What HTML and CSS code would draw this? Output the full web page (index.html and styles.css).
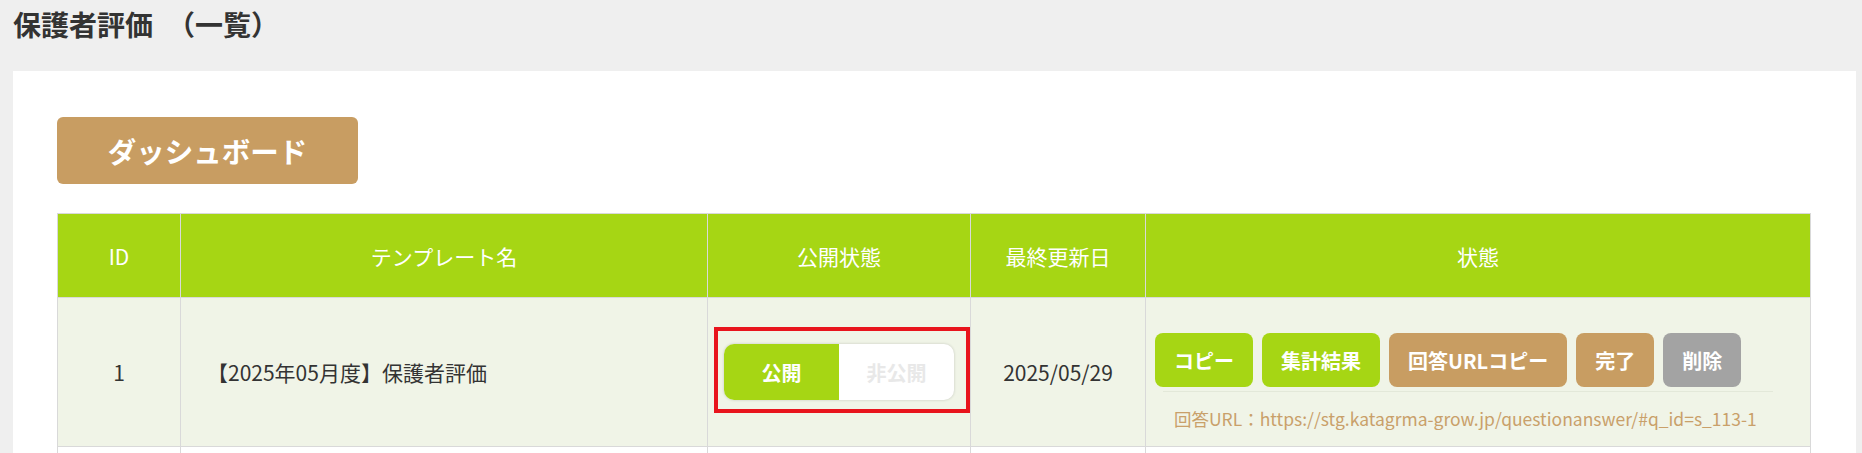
FILE: index.html
```html
<!DOCTYPE html>
<html lang="ja">
<head>
<meta charset="utf-8">
<title>保護者評価（一覧）</title>
<link rel="stylesheet" href="styles.css">
</head>
<body>
<h1 class="page-title">保護者評価　（一覧）</h1>
<main class="panel">
  <a class="btn-dashboard" href="#">ダッシュボード</a>
  <table class="list">
    <colgroup>
      <col class="c-id"><col class="c-name"><col class="c-pub"><col class="c-date"><col class="c-state">
    </colgroup>
    <thead>
      <tr>
        <th>ID</th>
        <th>テンプレート名</th>
        <th>公開状態</th>
        <th>最終更新日</th>
        <th>状態</th>
      </tr>
    </thead>
    <tbody>
      <tr class="row-odd">
        <td class="center">1</td>
        <td class="name">【2025年05月度】保護者評価</td>
        <td class="center">
          <div class="toggle">
            <span class="toggle-on">公開</span>
            <span class="toggle-off">非公開</span>
            <span class="mark"></span>
          </div>
        </td>
        <td class="center">2025/05/29</td>
        <td class="state">
          <div class="actions">
            <a class="btn btn-green" href="#">コピー</a>
            <a class="btn btn-green" href="#">集計結果</a>
            <a class="btn btn-tan" href="#">回答URLコピー</a>
            <a class="btn btn-tan" href="#">完了</a>
            <a class="btn btn-gray" href="#">削除</a>
          </div>
          <div class="answer-url">回答URL：https://stg.katagrma-grow.jp/questionanswer/#q_id=s_113-1</div>
        </td>
      </tr>
      <tr class="row-even">
        <td></td><td></td><td></td><td></td><td></td>
      </tr>
    </tbody>
  </table>
</main>
</body>
</html>
```
FILE: styles.css
```css
* { box-sizing: border-box; }

html, body {
  margin: 0;
  padding: 0;
  background: #efefef;
  font-family: "Noto Sans CJK JP", "Noto Sans", sans-serif;
  color: #333;
  overflow: hidden;
}

.page-title {
  margin: 0 0 27px;
  padding: 4px 13px 0;
  font-size: 28px;
  line-height: 40px;
  font-weight: 700;
  color: #333;
}

.panel {
  display: block;
  margin: 0 6px 0 13px;
  padding: 46px 45px 40px 44px;
  background: #fff;
  min-height: 500px;
}

.btn-dashboard {
  display: inline-flex;
  align-items: center;
  justify-content: center;
  width: 301px;
  height: 67px;
  border-radius: 6px;
  background: #c89d62;
  color: #fff;
  font-size: 28.5px;
  font-weight: 700;
  text-decoration: none;
}

.list {
  margin-top: 29px;
  width: 100%;
  border-collapse: collapse;
  table-layout: fixed;
  font-size: 21px;
}

.c-id { width: 123px; }
.c-name { width: 527px; }
.c-pub { width: 263px; }
.c-date { width: 175px; }

.list th,
.list td {
  border: 1px solid #d9d9d9;
}

.list th {
  height: 84px;
  background: #a6d614;
  color: #fff;
  font-weight: 400;
  text-align: center;
  vertical-align: middle;
}

.list td {
  height: 149px;
  vertical-align: middle;
  padding: 0;
}

.row-odd td { background: #f0f4e7; }
.row-even td { background: #fff; }

.center { text-align: center; }

.name {
  padding-left: 26px !important;
}

.toggle {
  position: relative;
  display: inline-flex;
  width: 230px;
  height: 56px;
  border-radius: 10px;
  background: #fff;
  box-shadow: 0 0 3px rgba(0, 0, 0, 0.18);
  vertical-align: middle;
}

.toggle-on,
.toggle-off {
  flex: 1;
  display: flex;
  align-items: center;
  justify-content: center;
  font-size: 20px;
  font-weight: 700;
}

.toggle-on {
  background: #a6d614;
  color: #fff;
  border-radius: 10px 0 0 10px;
}

.toggle-off {
  color: #e8e8e8;
}

.mark {
  position: absolute;
  top: -17px;
  left: -10px;
  right: -16px;
  bottom: -13px;
  border: 4px solid #e8141c;
}

.state {
  vertical-align: top !important;
  padding: 35px 0 0 9px !important;
}

.actions {
  display: flex;
  gap: 9px;
}

.btn {
  display: inline-flex;
  align-items: center;
  justify-content: center;
  height: 54px;
  padding: 0 19px;
  border-radius: 8px;
  color: #fff;
  font-size: 20px;
  font-weight: 700;
  text-decoration: none;
  white-space: nowrap;
}

.btn-green { background: #a6d614; }
.btn-tan { background: #c89d62; }
.btn-gray { background: #a3a3a3; }

.answer-url {
  margin: 4px 0 0 8px;
  width: 610px;
  border-top: 1px solid #e3e8d9;
  padding: 14px 0 0 11px;
  font-size: 17.5px;
  line-height: 25px;
  color: #c9a06a;
  white-space: nowrap;
}
```
